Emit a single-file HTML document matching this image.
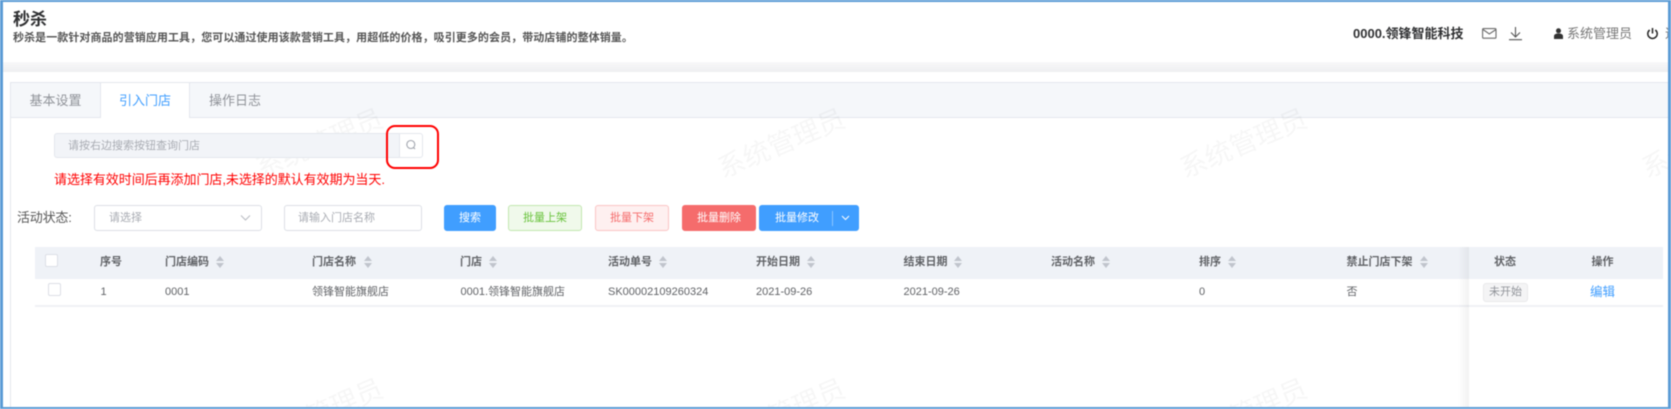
<!DOCTYPE html>
<html lang="zh"><head><meta charset="utf-8"><title>秒杀</title>
<style>
*{box-sizing:border-box}
html,body{margin:0;padding:0;background:#fff;overflow:hidden}
body{width:1671px;height:409px;overflow:hidden;position:relative;font-family:"Liberation Sans","Noto Sans CJK SC",sans-serif;color:#606266}
#p{position:absolute;left:0;top:0;width:1671px;height:409px;overflow:hidden;filter:blur(.45px)}
#p div,#p svg{position:absolute}
.t{white-space:nowrap;font-size:11px;line-height:16px;height:16px}
.h{font-weight:700;top:254px;color:#606266}
.b{top:284px;color:#606266}
.btn{top:205px;height:26px;border-radius:3px;font-size:11px;line-height:24px;text-align:center;border:1px solid}
.c{width:13px;height:13px;border:1px solid #dcdfe6;border-radius:2px;background:#fff}
.s{width:0;height:0;border-left:4.5px solid transparent;border-right:4.5px solid transparent}
.u{border-bottom:5px solid #c0c4cc;top:256px}
.d{border-top:5px solid #c0c4cc;top:263px}
</style></head><body><div id="p">

<div style="left:0;top:62px;width:1671px;height:10px;background:linear-gradient(#f8f8f9,#eeeff1)"></div>

<div class="t" style="left:13px;top:10px;font-size:17px;line-height:20px;height:20px;font-weight:700;color:#303133">秒杀</div>
<div class="t" style="left:13px;top:30px;font-size:11px;letter-spacing:.07px;font-weight:700;color:#555">秒杀是一款针对商品的营销应用工具，您可以通过使用该款营销工具，用超低的价格，吸引更多的会员，带动店铺的整体销量。</div>

<div class="t" style="left:1353px;top:26px;font-size:13px;font-weight:700;color:#303133">0000.领锋智能科技</div>
<svg style="left:1482px;top:28px" width="15" height="11" viewBox="0 0 15 11" fill="none" stroke="#6b6b6b" stroke-width="1.1"><rect x=".6" y=".6" width="13.4" height="9.6" rx="1"/><path d="M1 1.5 7.3 6 14 1.5"/></svg>
<svg style="left:1508px;top:26px" width="15" height="15" viewBox="0 0 15 15" fill="none" stroke="#555" stroke-width="1.1"><path d="M7.5 1v9.5M3 6.5l4.5 4.5L12 6.500M1 13.700h13"/></svg>
<svg style="left:1554px;top:28px" width="9" height="11" viewBox="0 0 9 11" fill="#333"><circle cx="4.500" cy="2.800" r="2.500"/><path d="M0 11V8.200C0 6.500 1.500 5.500 4.500 5.500S9 6.500 9 8.200V11z"/></svg>
<div class="t" style="left:1567px;top:26px;font-size:13px;color:#777">系统管理员</div>
<svg style="left:1646px;top:27px" width="13" height="13" viewBox="0 0 13 13" fill="none" stroke="#222" stroke-width="1.500"><path d="M6.500 1v5.500M3.700 3A4.700 4.700 0 1 0 9.300 3"/></svg>
<div class="t" style="left:1665px;top:26px;width:6px;overflow:hidden;font-size:13px;color:#777">退出</div>

<div style="left:10px;top:82px;width:1659px;height:327px;border:1px solid #e4e7ed;background:#fff"></div>
<div style="left:11px;top:83px;width:1657px;height:35px;background:#f5f7fa;border-bottom:1px solid #e4e7ed"></div>
<div style="left:100px;top:83px;width:90px;height:35px;background:#fff;border-left:1px solid #e4e7ed;border-right:1px solid #e4e7ed"></div>
<div class="t" style="left:29.500px;top:93px;font-size:13px;color:#909399">基本设置</div>
<div class="t" style="left:119px;top:93px;font-size:13px;color:#409eff">引入门店</div>
<div class="t" style="left:209px;top:93px;font-size:13px;color:#909399">操作日志</div>

<svg style="left:0;top:0" width="1671" height="409" viewBox="0 0 1671 409" fill="rgba(0,0,0,.036)" font-size="27" font-family="Liberation Sans, Noto Sans CJK SC, sans-serif" text-anchor="middle">
<text transform="translate(323 152) rotate(-23)">系统管理员</text>
<text transform="translate(785 152) rotate(-23)">系统管理员</text>
<text transform="translate(1247 152) rotate(-23)">系统管理员</text>
<text transform="translate(1709 152) rotate(-23)">系统管理员</text>
<text transform="translate(323 422) rotate(-23)">系统管理员</text>
<text transform="translate(785 422) rotate(-23)">系统管理员</text>
<text transform="translate(1247 422) rotate(-23)">系统管理员</text>
</svg>

<div style="left:54px;top:133px;width:346px;height:25px;background:#f2f4f8;border:1px solid #e4e7ed;border-radius:3px 0 0 3px"></div>
<div style="left:399px;top:133px;width:24px;height:25px;background:#fff;border:1px solid #e4e7ed;border-radius:0 3px 3px 0"></div>
<svg style="left:405px;top:139px" width="12" height="12" viewBox="0 0 12 12" fill="none" stroke="#a0a4ad" stroke-width="1.100"><circle cx="5.800" cy="5.500" r="4"/><path d="M8.500 8.500 10 10"/></svg>
<div class="t" style="left:68px;top:138px;color:#a8abb2">请按右边搜索按钮查询门店</div>
<div style="left:385.500px;top:125px;width:53.500px;height:44px;border:2px solid #f00;border-radius:9px"></div>
<div class="t" style="left:54px;top:172px;font-size:13px;color:#f00;letter-spacing:-.05px">请选择有效时间后再添加门店,未选择的默认有效期为当天.</div>

<div class="t" style="left:17px;top:210px;font-size:13px;letter-spacing:-.2px;color:#555">活动状态:</div>
<div style="left:94px;top:205px;width:168px;height:26px;border:1px solid #dcdfe6;border-radius:3px"></div>
<div class="t" style="left:109px;top:210px;color:#a8abb2">请选择</div>
<svg style="left:240px;top:214px" width="11" height="8" viewBox="0 0 11 8" fill="none" stroke="#b8bbc2" stroke-width="1"><path d="M1 1.500 5.500 6 10 1.500"/></svg>
<div style="left:284px;top:205px;width:138px;height:26px;border:1px solid #dcdfe6;border-radius:3px"></div>
<div class="t" style="left:298px;top:210px;color:#a8abb2">请输入门店名称</div>
<div class="btn" style="left:444px;width:52px;background:#409eff;border-color:#409eff;color:#fff">搜索</div>
<div class="btn" style="left:508px;width:74px;background:#f0f9eb;border-color:#c2e7b0;color:#67c23a">批量上架</div>
<div class="btn" style="left:595px;width:74px;background:#fef0f0;border-color:#fbc4c4;color:#f56c6c">批量下架</div>
<div class="btn" style="left:682px;width:74px;background:#f56c6c;border-color:#f56c6c;color:#fff">批量删除</div>
<div class="btn" style="left:759px;width:100px;background:#409eff;border-color:#409eff;color:#fff;text-align:left;padding-left:15px">批量修改</div>
<div style="left:832px;top:211px;width:1px;height:15px;background:#8cc5ff"></div>
<svg style="left:841px;top:215px" width="9" height="6" viewBox="0 0 9 6" fill="none" stroke="#fff" stroke-width="1"><path d="M1 1l3.500 3.500L8 1"/></svg>

<div style="left:35px;top:247px;width:1628px;height:32px;background:#eff2f7"></div>
<div style="left:35px;top:305px;width:1628px;height:2px;background:#f0f1f5"></div>
<div class="c" style="left:45px;top:254px"></div>
<div class="c" style="left:48px;top:283px"></div>

<div class="t h" style="left:100px">序号</div>
<div class="t h" style="left:165px">门店编码</div><div class="s u" style="left:215.500px"></div><div class="s d" style="left:215.500px"></div>
<div class="t h" style="left:312px">门店名称</div><div class="s u" style="left:363.500px"></div><div class="s d" style="left:363.500px"></div>
<div class="t h" style="left:460px">门店</div><div class="s u" style="left:488.500px"></div><div class="s d" style="left:488.500px"></div>
<div class="t h" style="left:608px">活动单号</div><div class="s u" style="left:658.500px"></div><div class="s d" style="left:658.500px"></div>
<div class="t h" style="left:756px">开始日期</div><div class="s u" style="left:806.500px"></div><div class="s d" style="left:806.500px"></div>
<div class="t h" style="left:903.500px">结束日期</div><div class="s u" style="left:954px"></div><div class="s d" style="left:954px"></div>
<div class="t h" style="left:1051px">活动名称</div><div class="s u" style="left:1102px"></div><div class="s d" style="left:1102px"></div>
<div class="t h" style="left:1199px">排序</div><div class="s u" style="left:1227.500px"></div><div class="s d" style="left:1227.500px"></div>
<div class="t h" style="left:1346.500px">禁止门店下架</div><div class="s u" style="left:1419.500px"></div><div class="s d" style="left:1419.500px"></div>

<div class="t b" style="left:100.500px">1</div>
<div class="t b" style="left:165px">0001</div>
<div class="t b" style="left:312px">领锋智能旗舰店</div>
<div class="t b" style="left:460.500px">0001.领锋智能旗舰店</div>
<div class="t b" style="left:608px">SK00002109260324</div>
<div class="t b" style="left:756px">2021-09-26</div>
<div class="t b" style="left:903.500px">2021-09-26</div>
<div class="t b" style="left:1199px">0</div>
<div class="t b" style="left:1346.500px">否</div>

<div style="left:1458px;top:247px;width:11px;height:160px;background:linear-gradient(to right,rgba(0,0,0,0),rgba(0,0,0,.05))"></div>
<div class="t h" style="left:1494px">状态</div>
<div class="t h" style="left:1591.500px">操作</div>
<div style="left:1483px;top:283px;width:45px;height:19px;background:#f4f4f5;border:1px solid #e9e9eb;border-radius:3px"></div>
<div class="t b" style="left:1489px;color:#909399">未开始</div>
<div class="t b" style="left:1590px;font-size:12.500px;color:#409eff">编辑</div>

<div style="left:0;top:0;width:1671px;height:409px;border:solid #5b9bd5;border-width:2px 3px 2px 3px"></div>
</div></body></html>
